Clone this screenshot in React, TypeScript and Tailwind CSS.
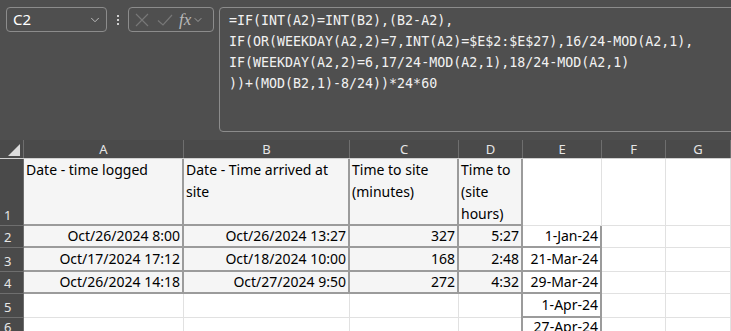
import { ChevronDown } from "lucide-react";

const cols = ["A", "B", "C", "D", "E", "F", "G"];
const colW = [160, 166, 109, 64, 79, 64, 65];
const rowH = [67, 22, 24, 22, 24, 20];

const formula = [
  "=IF(INT(A2)=INT(B2),(B2-A2),",
  "IF(OR(WEEKDAY(A2,2)=7,INT(A2)=$E$2:$E$27),16/24-MOD(A2,1),",
  "IF(WEEKDAY(A2,2)=6,17/24-MOD(A2,1),18/24-MOD(A2,1)",
  "))+(MOD(B2,1)-8/24))*24*60",
];

type Cell = { text?: string; right?: boolean; kind: "data" | "date" | "plain" };

const rows: Cell[][] = [
  [
    { text: "Date - time logged", kind: "data" },
    { text: "Date - Time arrived at site", kind: "data" },
    { text: "Time to site (minutes)", kind: "data" },
    { text: "Time to (site hours)", kind: "data" },
    { kind: "plain" },
    { kind: "plain" },
    { kind: "plain" },
  ],
  [
    { text: "Oct/26/2024 8:00", right: true, kind: "data" },
    { text: "Oct/26/2024 13:27", right: true, kind: "data" },
    { text: "327", right: true, kind: "data" },
    { text: "5:27", right: true, kind: "data" },
    { text: "1-Jan-24", right: true, kind: "date" },
    { kind: "plain" },
    { kind: "plain" },
  ],
  [
    { text: "Oct/17/2024 17:12", right: true, kind: "data" },
    { text: "Oct/18/2024 10:00", right: true, kind: "data" },
    { text: "168", right: true, kind: "data" },
    { text: "2:48", right: true, kind: "data" },
    { text: "21-Mar-24", right: true, kind: "date" },
    { kind: "plain" },
    { kind: "plain" },
  ],
  [
    { text: "Oct/26/2024 14:18", right: true, kind: "data" },
    { text: "Oct/27/2024 9:50", right: true, kind: "data" },
    { text: "272", right: true, kind: "data" },
    { text: "4:32", right: true, kind: "data" },
    { text: "29-Mar-24", right: true, kind: "date" },
    { kind: "plain" },
    { kind: "plain" },
  ],
  [
    { kind: "plain" },
    { kind: "plain" },
    { kind: "plain" },
    { kind: "plain" },
    { text: "1-Apr-24", right: true, kind: "date" },
    { kind: "plain" },
    { kind: "plain" },
  ],
  [
    { kind: "plain" },
    { kind: "plain" },
    { kind: "plain" },
    { kind: "plain" },
    { text: "27-Apr-24", right: true, kind: "date" },
    { kind: "plain" },
    { kind: "plain" },
  ],
];

function cellClass(c: Cell) {
  if (c.kind === "data") return "bg-[#f5f5f5] border-r-2 border-b-2 border-[#9b9b9b]";
  if (c.kind === "date") return "bg-white border-x-2 border-b-2 border-[#9b9b9b] -ml-[2px]";
  return "bg-white border-r border-b border-[#e1e1e1]";
}

export default function App() {
  return (
    <div className="w-[731px] h-[331px] overflow-hidden bg-[#4f4f4f] font-['Segoe_UI','Noto_Sans',sans-serif]">
      {/* formula bar */}
      <div className="flex items-start h-[140px] pt-[7px] pl-[6px]">
        <div className="w-[101px] h-[25px] rounded-[4px] border border-[#8c8c8c] flex items-center justify-between pl-[6px] pr-[4px] text-[15px] text-white">
          <span>C2</span>
          <ChevronDown size={14} strokeWidth={1.5} className="text-[#c8c8c8]" />
        </div>
        <div className="w-[21px] h-[25px] flex flex-col items-center justify-center gap-[2px]">
          <span className="w-[2px] h-[2px] bg-[#cfcfcf]" />
          <span className="w-[2px] h-[2px] bg-[#cfcfcf]" />
          <span className="w-[2px] h-[2px] bg-[#cfcfcf]" />
        </div>
        <div className="w-[86px] h-[25px] rounded-[4px] border border-[#8c8c8c] flex items-center pl-[6px] gap-[8px]">
          <svg width="14" height="14" viewBox="0 0 14 14" className="text-[#777]">
            <path d="M1 1 L13 13 M13 1 L1 13" stroke="currentColor" strokeWidth="1.2" fill="none" />
          </svg>
          <svg width="16" height="14" viewBox="0 0 16 14" className="text-[#777]">
            <path d="M1 7.5 L6 12 L15 2" stroke="currentColor" strokeWidth="1.2" fill="none" />
          </svg>
          <span className="-ml-[2px] text-[17px] leading-none italic text-[#b8b8b8] font-['Liberation_Serif',serif]">fx</span>
          <ChevronDown size={12} strokeWidth={1.5} className="-ml-[7px] text-[#b8b8b8]" />
        </div>
        <div className="ml-[5px] h-[125px] flex-1 -mr-[4px] rounded-[4px] border border-[#8c8c8c] pl-[9px] pt-[2px] font-['DejaVu_Sans_Mono',monospace] text-[13.3px] leading-[21px] text-[#f2f2f2]">
          {formula.map((l) => (
            <div key={l} className="whitespace-pre">{l}</div>
          ))}
        </div>
      </div>

      {/* column headers */}
      <div className="flex h-[19px] bg-[#4a4a4a] border-b border-[#d0d0d0] text-[13px] text-[#e6e6e6]">
        <div className="w-[24px] border-r border-[#6e6e6e] relative">
          <svg width="12" height="12" viewBox="0 0 12 12" className="absolute left-[8px] top-[4px]">
            <path d="M12 0 L12 12 L0 12 Z" fill="#dcdcdc" />
          </svg>
        </div>
        {cols.map((c, i) => (
          <div
            key={c}
            style={{ width: colW[i] }}
            className="border-r border-[#6e6e6e] flex items-center justify-center leading-none"
          >
            {c}
          </div>
        ))}
      </div>

      {/* rows */}
      {rows.map((r, ri) => (
        <div key={ri} className="flex" style={{ height: rowH[ri] }}>
          <div className="w-[24px] shrink-0 bg-[#4a4a4a] border-r border-b border-[#6e6e6e] flex items-end pl-[4px] text-[13px] text-[#e6e6e6] leading-[20px]">
            {ri + 1}
          </div>
          {r.map((c, ci) => (
            <div
              key={ci}
              style={{ width: c.kind === "date" ? colW[ci] + 2 : colW[ci] }}
              className={`shrink-0 box-border overflow-hidden text-[14px] text-black px-[2px] ${
                ri === 0 ? "leading-[22px]" : "flex items-center leading-none whitespace-nowrap"
              } ${c.right ? "justify-end text-right" : ""} ${cellClass(c)}`}
            >
              {c.text}
            </div>
          ))}
        </div>
      ))}
    </div>
  );
}
